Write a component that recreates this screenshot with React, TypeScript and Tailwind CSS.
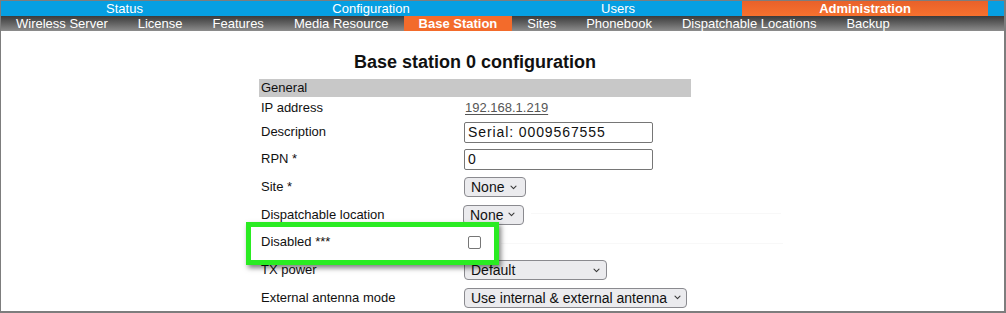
import React from 'react';

const topTabs = [
  { label: 'Status', w: 'w-[247px]', active: false },
  { label: 'Configuration', w: 'w-[246px]', active: false },
  { label: 'Users', w: 'w-[248px]', active: false },
  { label: 'Administration', w: 'w-[246px]', active: true },
];

const subTabs = ['Wireless Server', 'License', 'Features', 'Media Resource', 'Base Station', 'Sites', 'Phonebook', 'Dispatchable Locations', 'Backup'];

const Chevron = () => (
  <svg width="7" height="5" viewBox="0 0 7 5" className="shrink-0 ml-auto">
    <path d="M1 1.2 L3.5 3.6 L6 1.2" fill="none" stroke="#3a3a3a" strokeWidth="1.1" strokeLinecap="round" strokeLinejoin="round" />
  </svg>
);

// Fake select box, styled like the browser's native one
const SelectBox = ({ value, width, pr = 'pr-[8px]', shift = '' }: { value: string; width: string; pr?: string; shift?: string }) => (
  <div className={`${width} ${shift} ${pr} h-[20px] flex items-center gap-[4px] pl-[6px] bg-[#ebebee] border border-[#8a8a8f] rounded-[4px] text-[14px] leading-none text-[#111]`}>
    <span className="whitespace-nowrap">{value}</span>
    <Chevron />
  </div>
);

const TextInput = ({ value }: { value: string }) => (
  <div className="w-[189px] h-[21px] flex items-center px-[3px] bg-white border border-[#767676] rounded-[2px] text-[14px] tracking-[0.9px] leading-none text-[#111]">
    {value}
  </div>
);

const Row = ({ label, h, children }: { label: string; h: string; children?: React.ReactNode }) => (
  <div className={`flex items-center ${h}`}>
    <div className="w-[205px] pl-[2px] text-[13px] text-[#111]">{label}</div>
    <div className="flex-1 flex items-center">{children}</div>
  </div>
);

export default function App() {
  return (
    <div
      className="relative w-[1006px] h-[313px] overflow-hidden bg-white border-t border-l border-r-2 border-b-2 border-[#7d7d7d]"
      style={{ fontFamily: '"Liberation Sans", Arial, sans-serif' }}
    >
      {/* Top menu */}
      <div className="flex h-[15px] bg-[#069fe2] text-white text-[13px] leading-[15px]">
        {topTabs.map((t) => (
          <div
            key={t.label}
            className={`${t.w} text-center ${t.active ? 'bg-linear-to-b from-[#e8612a] to-[#f7712e] font-bold' : ''}`}
          >
            {t.label}
          </div>
        ))}
      </div>

      {/* Sub menu */}
      <div className="flex h-[15px] bg-linear-to-b from-[#3b3b3b] to-[#8d8d8d] text-white text-[13px] leading-[15px]">
        {subTabs.map((s) => (
          <div key={s} className={`px-[15px] ${s === 'Base Station' ? 'bg-[#f36b2b] font-bold' : ''}`}>
            {s}
          </div>
        ))}
      </div>

      {/* Content */}
      <div className="ml-[258px] w-[432px]">
        <h1 className="mt-[21px] mb-[6px] text-center text-[18px] leading-[21px] font-bold text-[#111]">
          Base station 0 configuration
        </h1>

        <div className="h-[18px] bg-[#c8c8c8] pl-[2px] text-[13px] leading-[18px] text-[#111]">General</div>

        <Row label="IP address" h="h-[22px]">
          <span className="pl-[1px] text-[13px] text-[#555] underline underline-offset-2">192.168.1.219</span>
        </Row>
        <Row label="Description" h="h-[26px]">
          <TextInput value="Serial: 0009567555" />
        </Row>
        <Row label="RPN *" h="h-[28px]">
          <TextInput value="0" />
        </Row>
        <Row label="Site *" h="h-[28px]">
          <SelectBox value="None" width="w-[62px]" />
        </Row>
        <Row label="Dispatchable location" h="h-[27px]">
          <SelectBox value="None" width="w-[61px]" shift="-ml-[1px]" />
        </Row>
        <Row label="Disabled ***" h="h-[28px]">
          <div className="ml-[4px] w-[13px] h-[13px] border border-[#767676] rounded-[2px] bg-white" />
        </Row>
        <Row label="TX power" h="h-[28px]">
          <SelectBox value="Default" width="w-[143px]" pr="pr-[6px]" />
        </Row>
        <Row label="External antenna mode" h="h-[27px]">
          <SelectBox value="Use internal & external antenna" width="w-[223px]" pr="pr-[5px]" />
        </Row>
      </div>

      {/* faint traces left by the annotation */}
      <div className="absolute left-[530px] top-[212px] w-[250px] h-px bg-[#f8f8f8]" />
      <div className="absolute left-[500px] top-[242px] w-[282px] h-px bg-[#f8f8f8]" />

      {/* Green highlight annotation */}
      <div className="absolute left-[245px] top-[221px] w-[253px] h-[43px] border-[5px] border-[#2aeb22] shadow-[2px_3px_5px_rgba(0,0,0,0.5)]" />
    </div>
  );
}
